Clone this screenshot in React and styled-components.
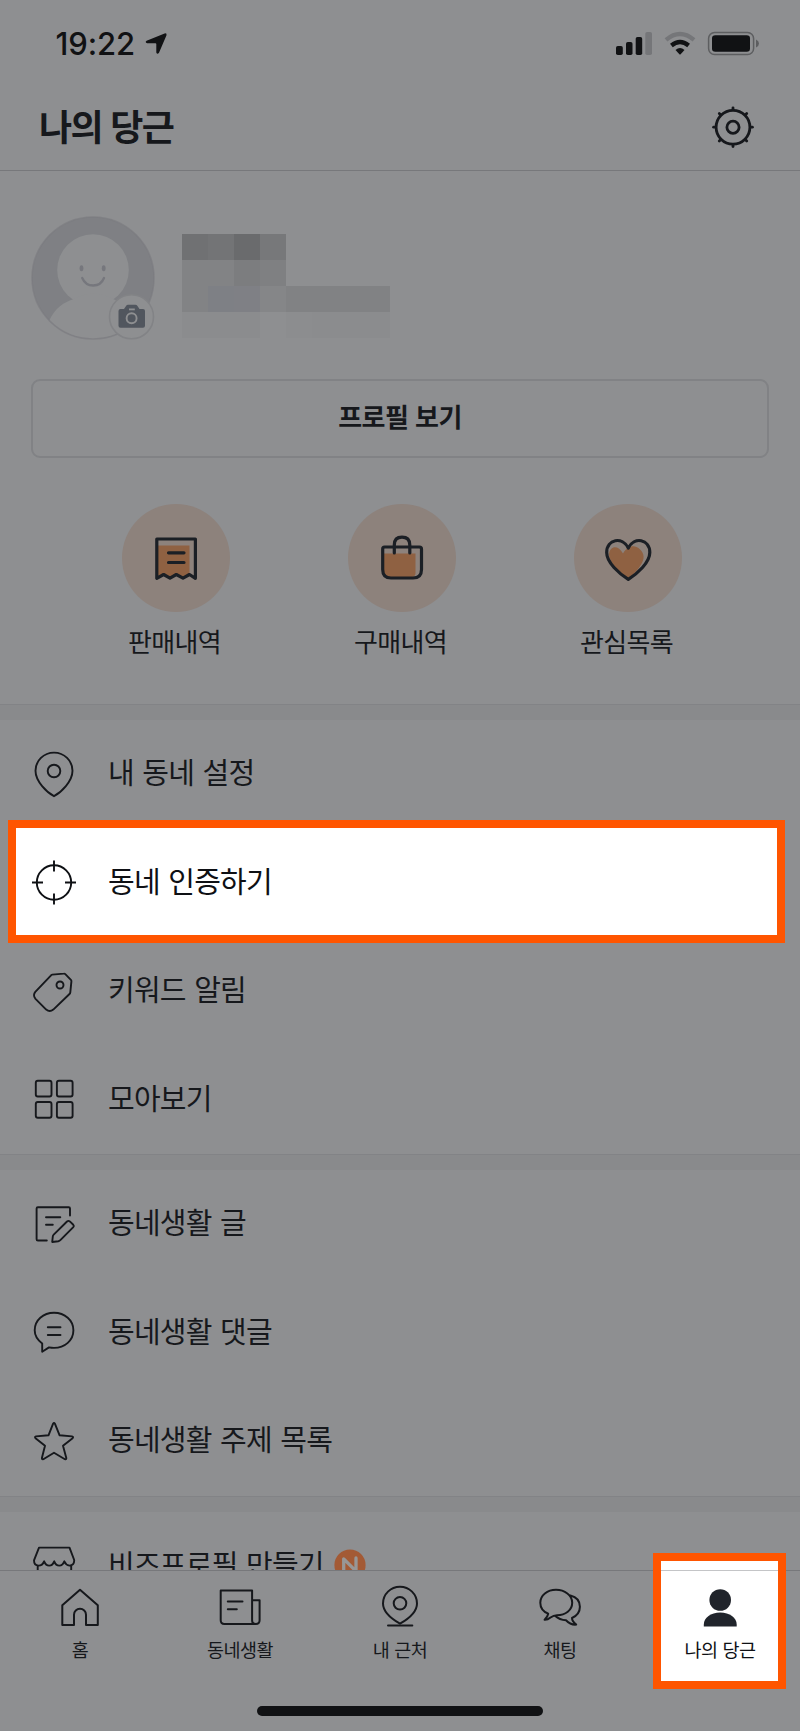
import React from "react";
import styled, { createGlobalStyle, css } from "styled-components";

const c = {
  bg: "#8e8f91",
  band: "#898a8c",
  bandLine: "#828386",
  line: "#77787b",
  ink: "#16181c",
  accent: "#ff5500",
  disc: "#8d827c",
  orange: "#8f6142",
};

const GlobalStyle = createGlobalStyle`
  *, *::before, *::after { box-sizing: border-box; }
  body {
    margin: 0;
    background: ${c.bg};
    font-family: "Noto Sans CJK KR", "Noto Sans", sans-serif;
    color: ${c.ink};
  }
`;

const Screen = styled.div`
  width: 800px;
  height: 1731px;
  display: flex;
  flex-direction: column;
  overflow: hidden;
  background: ${c.bg};
`;

const StatusBar = styled.div`
  height: 84px;
  flex: none;
  display: flex;
  justify-content: space-between;
  padding: 28px 40px 0 55.5px;
`;

const StatusGroup = styled.div`
  display: flex;
  height: 31px;
  align-items: center;
`;

const Clock = styled.span`
  font: 500 31px/31px Inter, sans-serif;
  letter-spacing: -0.1px;
  width: 88px;
  white-space: nowrap;
  color: #111214;
`;

const Header = styled.header`
  height: 87px;
  flex: none;
  display: flex;
  align-items: center;
  justify-content: space-between;
  padding: 0 43px 0 39px;
  border-bottom: 1px solid ${c.line};
`;

const Title = styled.h1`
  margin: 0;
  padding-bottom: 5px;
  font-size: 36px;
  line-height: 50px;
  font-weight: 700;
  letter-spacing: -1.7px;
  word-spacing: 2px;
`;

const Content = styled.main`
  flex: 1;
  min-height: 0;
  overflow: hidden;
`;

const Profile = styled.section`
  height: 533px;
  padding: 45px 31px 0;
`;

const ProfileTop = styled.div`
  display: flex;
  gap: 27px;
  height: 163px;
`;

const Mosaic = styled.div`
  display: grid;
  grid-template-columns: repeat(8, 26px);
  grid-auto-rows: 26px;
  padding-top: 18px;
`;

const MosaicCell = styled.span`
  background: ${(p) => p.$tone};
`;

const ProfileButton = styled.button`
  display: flex;
  align-items: center;
  justify-content: center;
  width: 738px;
  height: 79px;
  padding: 0 0 6px;
  border: 2px solid #818285;
  border-radius: 9px;
  background: transparent;
  color: ${c.ink};
  font: 700 26px/36px "Noto Sans CJK KR", sans-serif;
  letter-spacing: -0.6px;
  word-spacing: 1.5px;
`;

const Shortcuts = styled.div`
  display: flex;
  justify-content: space-between;
  padding: 46px 86px 0 90px;
`;

const Shortcut = styled.div`
  display: flex;
  flex-direction: column;
  align-items: center;
  width: 110px;
`;

const Disc = styled.div`
  width: 108.4px;
  height: 108.4px;
  border-radius: 50%;
  background: ${c.disc};
`;

const ShortcutLabel = styled.span`
  margin-top: 11px;
  font-size: 26px;
  line-height: 36px;
  letter-spacing: -0.7px;
  margin-right: 3px;
  white-space: nowrap;
`;

const Band = styled.div`
  height: 16.4px;
  background: ${c.band};
  border-top: 1px solid ${c.bandLine};
`;

const frame = css`
  position: relative;
  z-index: 0;
  color: #0e1014;
  &::before {
    content: "";
    position: absolute;
    z-index: -1;
    background: #fff;
    border: 8px solid ${c.accent};
  }
`;

const Row = styled.div`
  display: flex;
  align-items: center;
  height: 108.4px;
  padding: 0 0 1.4px 30px;
  ${(p) =>
    p.$highlight &&
    css`
      ${frame}
      &::before {
        left: 8px;
        right: 15px;
        top: -8.8px;
        height: 123px;
      }
    `}
`;

const RowLabel = styled.span`
  margin-left: 30px;
  padding-bottom: 5px;
  font-size: 29px;
  line-height: 40px;
  letter-spacing: -0.75px;
  word-spacing: 2.6px;
  white-space: nowrap;
`;

const NewBadge = styled.span`
  display: flex;
  margin-left: 10.5px;
`;

const TabBar = styled.nav`
  flex: none;
  display: flex;
  height: 136px;
  border-top: 1px solid ${c.line};
`;

const Tab = styled.div`
  display: flex;
  flex-direction: column;
  align-items: center;
  width: 160px;
  height: 110px;
  padding-top: 13px;
  ${(p) =>
    p.$highlight &&
    css`
      ${frame}
      &::before {
        left: 13px;
        top: -18px;
        width: 133px;
        height: 136px;
      }
      &::after {
        content: "";
        position: absolute;
        z-index: -1;
        left: 21px;
        top: -1px;
        width: 117px;
        height: 1px;
        background: #c4c5c7;
      }
    `}
`;

const TabLabel = styled.span`
  margin-top: 4px;
  font-size: 18.5px;
  line-height: 26px;
  letter-spacing: -0.5px;
  word-spacing: 1.4px;
  white-space: nowrap;
`;

const HomeArea = styled.div`
  flex: none;
  display: flex;
  justify-content: center;
  height: 25px;
`;

const HomeIndicator = styled.div`
  width: 286px;
  height: 10px;
  border-radius: 5px;
  background: #111214;
`;

const LineIcon = styled.svg.attrs({ viewBox: "0 0 48 48", width: 48, height: 48 })`
  flex: none;
  fill: none;
  stroke: currentColor;
  stroke-width: ${(p) => p.$weight || 1.9};
  stroke-linecap: round;
  stroke-linejoin: round;
`;

const icons = {
  pin: (
    <>
      <path d="M24 46.2C17 42.5 5.5 31.5 5.5 20.8a18.5 18.2 0 0 1 37 0C42.5 31.5 31 42.5 24 46.2Z" />
      <circle cx="24" cy="21" r="6.3" />
    </>
  ),
  target: (
    <>
      <circle cx="24" cy="24.5" r="17.2" />
      <path strokeLinecap="butt" d="M24 2.5v11M24 35.5v11M2 24.5h11M35 24.5h11" />
    </>
  ),
  tag: (
    <>
      <path d="M22.2 7.6 33.8 6.6Q34.7 6.5 35.3 7.1L40.9 12.9Q41.5 13.5 41.4 14.4L40.3 25.4Q40.2 26.3 39.5 27L23.3 42.6Q19.7 45.5 16.2 42.6L5.5 31.8Q2.5 28.2 5.3 24.8L20.8 8.6Q21.4 7.7 22.2 7.6Z" />
      <circle cx="30" cy="18" r="3.5" />
    </>
  ),
  grid: (
    <>
      <rect x="5.8" y="5.8" width="15.7" height="15.7" rx="2" />
      <rect x="26.9" y="5.8" width="15.7" height="15.7" rx="2" />
      <rect x="5.8" y="27" width="15.7" height="15.7" rx="2" />
      <rect x="26.9" y="27" width="15.7" height="15.7" rx="2" />
    </>
  ),
  note: (
    <>
      <path d="M40 15.5V8.6Q40 7.3 38.7 7.3H7.9Q6.6 7.3 6.6 8.6V39.2Q6.6 40.5 7.9 40.5H16.8M16 17.2H30.3M16 24.7H22.8" />
      <path d="M22.2 42 22.8 36.5Q22.9 35.4 23.7 34.6L37 21.5Q38.5 20.3 39.8 21.4L43.3 24.8Q44.4 26 43.3 27.2L30.6 39.9Q29.6 40.9 28.3 41.2Z" />
    </>
  ),
  comment: (
    <>
      <path d="M12.2 35.5C7.5 32 4.7 27.5 4.7 22.3 4.7 12.3 13.2 4.8 24 4.8s19.4 7.5 19.4 17.5S34.8 39.9 24 39.9q-2.6 0-5-.5L12.2 43.8Z" />
      <path d="M17.8 19.3H30.5M17.8 27H30.5" />
    </>
  ),
  star: (
    <path d="M23.1 6.7Q24 5.3 24.9 6.7L29.6 18.3 42 19.4Q43.8 19.8 42.6 21.2L33 28.8 36.3 40.9Q36.5 42.8 34.9 42.2L24 35.7 13.3 42.2Q11.7 42.8 11.9 40.9L15 28.8 5.5 21.2Q4.3 19.8 6 19.4L18.5 18.3Z" />
  ),
  shop: (
    <path d="M9 6.6H39.5L44.2 19Q44.3 24.6 39.5 24.6 35.8 24 34.3 20.3 32.8 24.6 29.3 24.6T24.2 20.3Q22.6 24.6 19.2 24.6T14.1 20.3Q12.5 24.6 8.5 24.6 4 24.6 4 19.3ZM7.7 24.6V44H41.2V24.6" />
  ),
  home: (
    <path d="M24 5.8 41.8 21.3V41H30V30.8a6 6 0 0 0-12 0V41H6.3V21.3Z" />
  ),
  news: (
    <>
      <path d="M4.7 6.6H36.1V36.3Q36.1 40 39.8 40H8.4Q4.7 40 4.7 36.3ZM36.1 16.3H43.6V36.3Q43.6 40 39.8 40T36.1 36.3" />
      <path d="M11.8 17.4H26.5M11.8 25.3H20.8" />
    </>
  ),
  nearby: (
    <>
      <path d="M24 39.7C17 35.7 7 28.5 7 19.5a17 16.8 0 0 1 34 0C41 28.5 31 35.7 24 39.7Z" />
      <circle cx="24" cy="19.3" r="6.3" />
      <path d="M12 41.5H36.3" />
    </>
  ),
  chat: (
    <>
      <path d="M12.2 29.7C7.5 27.7 4.3 23.5 4.3 18.7 4.3 11.3 11.3 5.8 20 5.8s16.2 5.5 16.2 12.9S29.5 31.2 21 31.2Q17.5 31.4 14.5 33.5 11.5 36 8.6 35.8 11.6 33 12.2 29.7Z" />
      <path d="M34.4 11.5C40.5 13 43.9 17.5 43.9 22.8 43.9 27.5 41 31.8 36 34 36 36.8 37.5 38.5 40.2 40.6 35.5 41 32.5 39 30 36.3 25.5 36 22 34.5 19.3 32" />
    </>
  ),
  person: (
    <g fill="#20242b" stroke="none">
      <circle cx="24.2" cy="16" r="10.8" />
      <path d="M7.8 42.6V40.5C7.8 33.5 14.8 28.5 24.2 28.5S40.7 33.5 40.7 40.5V42.6Z" />
    </g>
  ),
};

function ArrowIcon() {
  return (
    <svg width="24" height="24" viewBox="0 0 24 24">
      <path d="M20.6 1.5Q23 .8 22.5 3.2L15 20.7Q13.3 22.8 12.3 20.5V12.1Q12.2 11.3 11.5 11.2H3.2Q.5 10.3 2.6 8.8Z" fill="#111214" />
    </svg>
  );
}

function StatusIcons() {
  return (
    <svg width="144" height="28" viewBox="616 30 144 28">
      <g fill="#111214">
        <rect x="616" y="46" width="6.8" height="9" rx="1.8" />
        <rect x="626" y="42" width="6.5" height="13" rx="1.8" />
        <rect x="635.7" y="37" width="6.5" height="18" rx="1.8" />
        <rect x="645.3" y="32" width="6.7" height="23" rx="1.8" fill="#757679" />
      </g>
      <g fill="none" strokeWidth="4.3">
        <path d="M666 39.8Q680 28 694 39.8" stroke="#757679" />
        <path d="M671.4 45.5Q680 38.5 688.6 45.5" stroke="#111214" />
      </g>
      <path d="M675.5 50Q680 46 684.5 50L680.6 54.2Q680 54.8 679.4 54.2Z" fill="#111214" />
      <rect x="708.6" y="32.5" width="45" height="22" rx="6" fill="none" stroke="#5d5e60" strokeWidth="1.5" />
      <rect x="712" y="35.3" width="38" height="16.4" rx="3.3" fill="#111214" />
      <path d="M756 39.5Q759 41 759 43.5T756 47.5Z" fill="#5d5e60" />
    </svg>
  );
}

function GearIcon() {
  return (
    <svg width="48" height="48" viewBox="0 0 48 48" fill="none" stroke={c.ink} strokeWidth="2.8" strokeLinecap="round">
      <circle cx="24" cy="24.2" r="16.9" />
      <circle cx="24" cy="24.2" r="6.1" />
      {[0, 45, 90, 135, 180, 225, 270, 315].map((a) => (
        <path key={a} d="M24 6.5V4.8" transform={`rotate(${a} 24 24.2)`} />
      ))}
    </svg>
  );
}

function Avatar() {
  return (
    <svg width="124" height="126" viewBox="0 0 124 126">
      <defs>
        <clipPath id="avatar-clip">
          <circle cx="62" cy="62" r="61" />
        </clipPath>
      </defs>
      <g clipPath="url(#avatar-clip)">
        <rect width="124" height="126" fill="#7f8084" />
        <circle cx="62" cy="54" r="35.8" fill={c.bg} />
        <path d="M18 105C24 92 33 86 43 83 55 76 70 76 82 83 95 88 105 98 112 126H18Z" fill={c.bg} />
      </g>
      <circle cx="62" cy="62" r="61" fill="none" stroke="#797a7e" strokeOpacity=".6" strokeWidth="1.5" />
      <g fill="#76777d">
        <ellipse cx="50.5" cy="52.2" rx="1.9" ry="3" />
        <ellipse cx="72.7" cy="52.2" rx="1.9" ry="3" />
      </g>
      <path d="M51.2 62C55.5 72 69 72 73 62" fill="none" stroke="#76777d" strokeWidth="2.3" strokeLinecap="round" />
      <g transform="translate(0 -.7)">
        <circle cx="100.5" cy="101.5" r="22" fill={c.bg} stroke="#828386" strokeWidth="1.6" />
        <path d="M89.5 93.8H93L95.2 90.4Q95.8 89.5 97 89.5H104.5Q105.7 89.5 106.3 90.4L108.5 93.8H112Q114 93.8 114 95.8V110.5Q114 112.5 112 112.5H89.5Q87.5 112.5 87.5 110.5V95.8Q87.5 93.8 89.5 93.8Z" fill="#51565e" />
        <rect x="98" y="93.2" width="5.8" height="1.8" fill={c.bg} />
        <circle cx="100.6" cy="103" r="5" fill="none" stroke={c.bg} strokeWidth="1.9" />
      </g>
    </svg>
  );
}

const discIcons = {
  sales: {
    fill: "M36 41.5H67.5V69.5L61 73 54.5 69.5 48 73 42 69.5 36 72Z",
    line: "M34.8 35H73.4V74.3L67.5 70.5 61 74.2 54.3 70.5 48 74.2 41.6 70.5 34.8 74.3ZM46.5 48.8H62M46.5 58.5H62",
  },
  purchases: {
    fill: "M35 49.5H67.5V69Q67.5 72 64.5 73H42Q35 72 35 65Z",
    line: "M36.5 43H71.5Q73.5 43 73.5 45V65.5Q73.5 74 65 74H43Q34.7 74 34.7 65.5V45Q34.7 43 36.5 43ZM46.3 49V41Q46.3 33.2 54 33.2T61.8 41V49",
  },
  likes: {
    fill: "M54.3 74.5C43 67 34.5 56.5 35 50 36 42 44 40.5 49 49.5 53.5 42 59 41.5 62.5 43 68 45.5 71 51 69 56.5 66.5 63 61 69.5 54.3 74.5Z",
    line: "M54.3 75.3C45 69.5 32.7 58.5 32.7 48.5 32.7 34.8 48.5 32.3 54.3 44 60 32.3 75.8 34.8 75.8 48.5 75.8 58.5 63.5 69.5 54.3 75.3Z",
  },
};

const DiscIcon = ({ name }) => (
  <Disc>
    <svg width="109" height="109" viewBox="0 0 109 109">
      <path d={discIcons[name].fill} fill={c.orange} />
      <path
        d={discIcons[name].line}
        stroke="#1b1f25"
        strokeWidth="3.2"
        fill="none"
        strokeLinecap="round"
        strokeLinejoin="round"
      />
    </svg>
  </Disc>
);

const mosaic = [
  ["#707173", "#737476", "#6a6b6d", "#77787a", null, null, null, null],
  ["#828385", "#828385", "#7c7d7f", "#7f8082", null, null, null, null],
  ["#828385", "#7e8085", "#7f8085", "#858688", "#818284", "#818284", "#818284", "#818284"],
  ["#8b8c8e", "#8b8c8e", "#8b8c8e", "#8e8f91", "#8c8d8f", "#8b8c8e", "#8b8c8e", "#8b8c8e"],
];

const shortcuts = [
  ["sales", "판매내역"],
  ["purchases", "구매내역"],
  ["likes", "관심목록"],
];

const sections = [
  [
    { icon: "pin", label: "내 동네 설정" },
    { icon: "target", label: "동네 인증하기", highlight: true },
    { icon: "tag", label: "키워드 알림" },
    { icon: "grid", label: "모아보기" },
  ],
  [
    { icon: "note", label: "동네생활 글" },
    { icon: "comment", label: "동네생활 댓글" },
    { icon: "star", label: "동네생활 주제 목록" },
  ],
  [{ icon: "shop", label: "비즈프로필 만들기", isNew: true }],
];

const tabs = [
  { icon: "home", label: "홈" },
  { icon: "news", label: "동네생활" },
  { icon: "nearby", label: "내 근처" },
  { icon: "chat", label: "채팅" },
  { icon: "person", label: "나의 당근", highlight: true },
];

export default function App() {
  return (
    <>
      <GlobalStyle />
      <Screen>
        <StatusBar>
          <StatusGroup>
            <Clock>19:22</Clock>
            <ArrowIcon />
          </StatusGroup>
          <StatusGroup>
            <StatusIcons />
          </StatusGroup>
        </StatusBar>
        <Header>
          <Title>나의 당근</Title>
          <GearIcon />
        </Header>
        <Content>
          <Profile>
            <ProfileTop>
              <Avatar />
              <Mosaic>
                {mosaic.flat().map((tone, i) => (
                  <MosaicCell key={i} $tone={tone || "transparent"} />
                ))}
              </Mosaic>
            </ProfileTop>
            <ProfileButton>프로필 보기</ProfileButton>
            <Shortcuts>
              {shortcuts.map(([name, label]) => (
                <Shortcut key={name}>
                  <DiscIcon name={name} />
                  <ShortcutLabel>{label}</ShortcutLabel>
                </Shortcut>
              ))}
            </Shortcuts>
          </Profile>
          {sections.map((rows, i) => (
            <section key={i}>
              <Band />
              {rows.map((r) => (
                <Row key={r.label} $highlight={r.highlight}>
                  <LineIcon>{icons[r.icon]}</LineIcon>
                  <RowLabel>{r.label}</RowLabel>
                  {r.isNew && (
                    <NewBadge>
                      <svg width="32" height="32" viewBox="0 0 32 32">
                        <circle cx="16" cy="16" r="15.6" fill="#a35a35" />
                        <path d="M9.7 23.5V9.8L22 22.2V9" fill="none" stroke="#989796" strokeWidth="3.3" strokeLinecap="round" strokeLinejoin="round" />
                      </svg>
                    </NewBadge>
                  )}
                </Row>
              ))}
            </section>
          ))}
        </Content>
        <TabBar>
          {tabs.map((t) => (
            <Tab key={t.label} $highlight={t.highlight}>
              <LineIcon $weight={2}>{icons[t.icon]}</LineIcon>
              <TabLabel>{t.label}</TabLabel>
            </Tab>
          ))}
        </TabBar>
        <HomeArea>
          <HomeIndicator />
        </HomeArea>
      </Screen>
    </>
  );
}
